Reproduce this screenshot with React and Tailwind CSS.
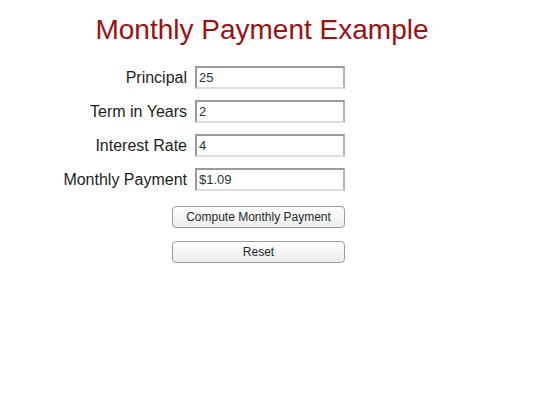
import { useState } from 'react';

const Field = ({ label, value, onChange, readOnly }) => (
  <div className="flex h-[23px] items-center">
    <label className="w-[195px] pr-[8px] text-right text-[16px] leading-[23px] text-[#1e1e1e]">{label}</label>
    <input
      value={value}
      readOnly={readOnly}
      onChange={(e) => onChange && onChange(e.target.value)}
      className="h-[23px] w-[150px] border-2 border-t-[#9a9a9a] border-l-[#9a9a9a] border-r-[#b4b4b4] border-b-[#dedede] bg-white px-[2px] text-[13px] text-[#1d3a36] outline-none"
    />
  </div>
);

export default function App() {
  const [principal, setPrincipal] = useState('25');
  const [years, setYears] = useState('2');
  const [rate, setRate] = useState('4');
  const [payment, setPayment] = useState('$1.09');

  const compute = () => {
    const p = parseFloat(principal);
    const n = parseFloat(years) * 12;
    const r = parseFloat(rate) / 1200;
    if (!p || !n) return;
    const m = r ? (p * r) / (1 - Math.pow(1 + r, -n)) : p / n;
    setPayment('$' + m.toFixed(2));
  };

  const reset = () => {
    setPrincipal('');
    setYears('');
    setRate('');
    setPayment('');
  };

  return (
    <div className="min-h-screen bg-white font-['Liberation_Sans',Arial,sans-serif]">
      <h1 className="w-[524px] pt-[14px] text-center text-[28px] leading-[32px] text-[#9b1111]">Monthly Payment Example</h1>

      <div className="mt-[20px] flex flex-col gap-[11px]">
        <Field label="Principal" value={principal} onChange={setPrincipal} />
        <Field label="Term in Years" value={years} onChange={setYears} />
        <Field label="Interest Rate" value={rate} onChange={setRate} />
        <Field label="Monthly Payment" value={payment} readOnly />
      </div>

      <div className="ml-[172px] mt-[15px] flex w-[173px] flex-col gap-[13px]">
        <button
          onClick={compute}
          className="h-[22px] w-full rounded-[4px] border border-[#9c9c9c] bg-gradient-to-b from-white to-[#ececec] text-[12px] text-[#1a2b2b]"
        >
          Compute Monthly Payment
        </button>
        <button
          onClick={reset}
          className="h-[22px] w-full rounded-[4px] border border-[#9c9c9c] bg-gradient-to-b from-white to-[#ececec] text-[12px] text-[#1a2b2b]"
        >
          Reset
        </button>
      </div>
    </div>
  );
}
